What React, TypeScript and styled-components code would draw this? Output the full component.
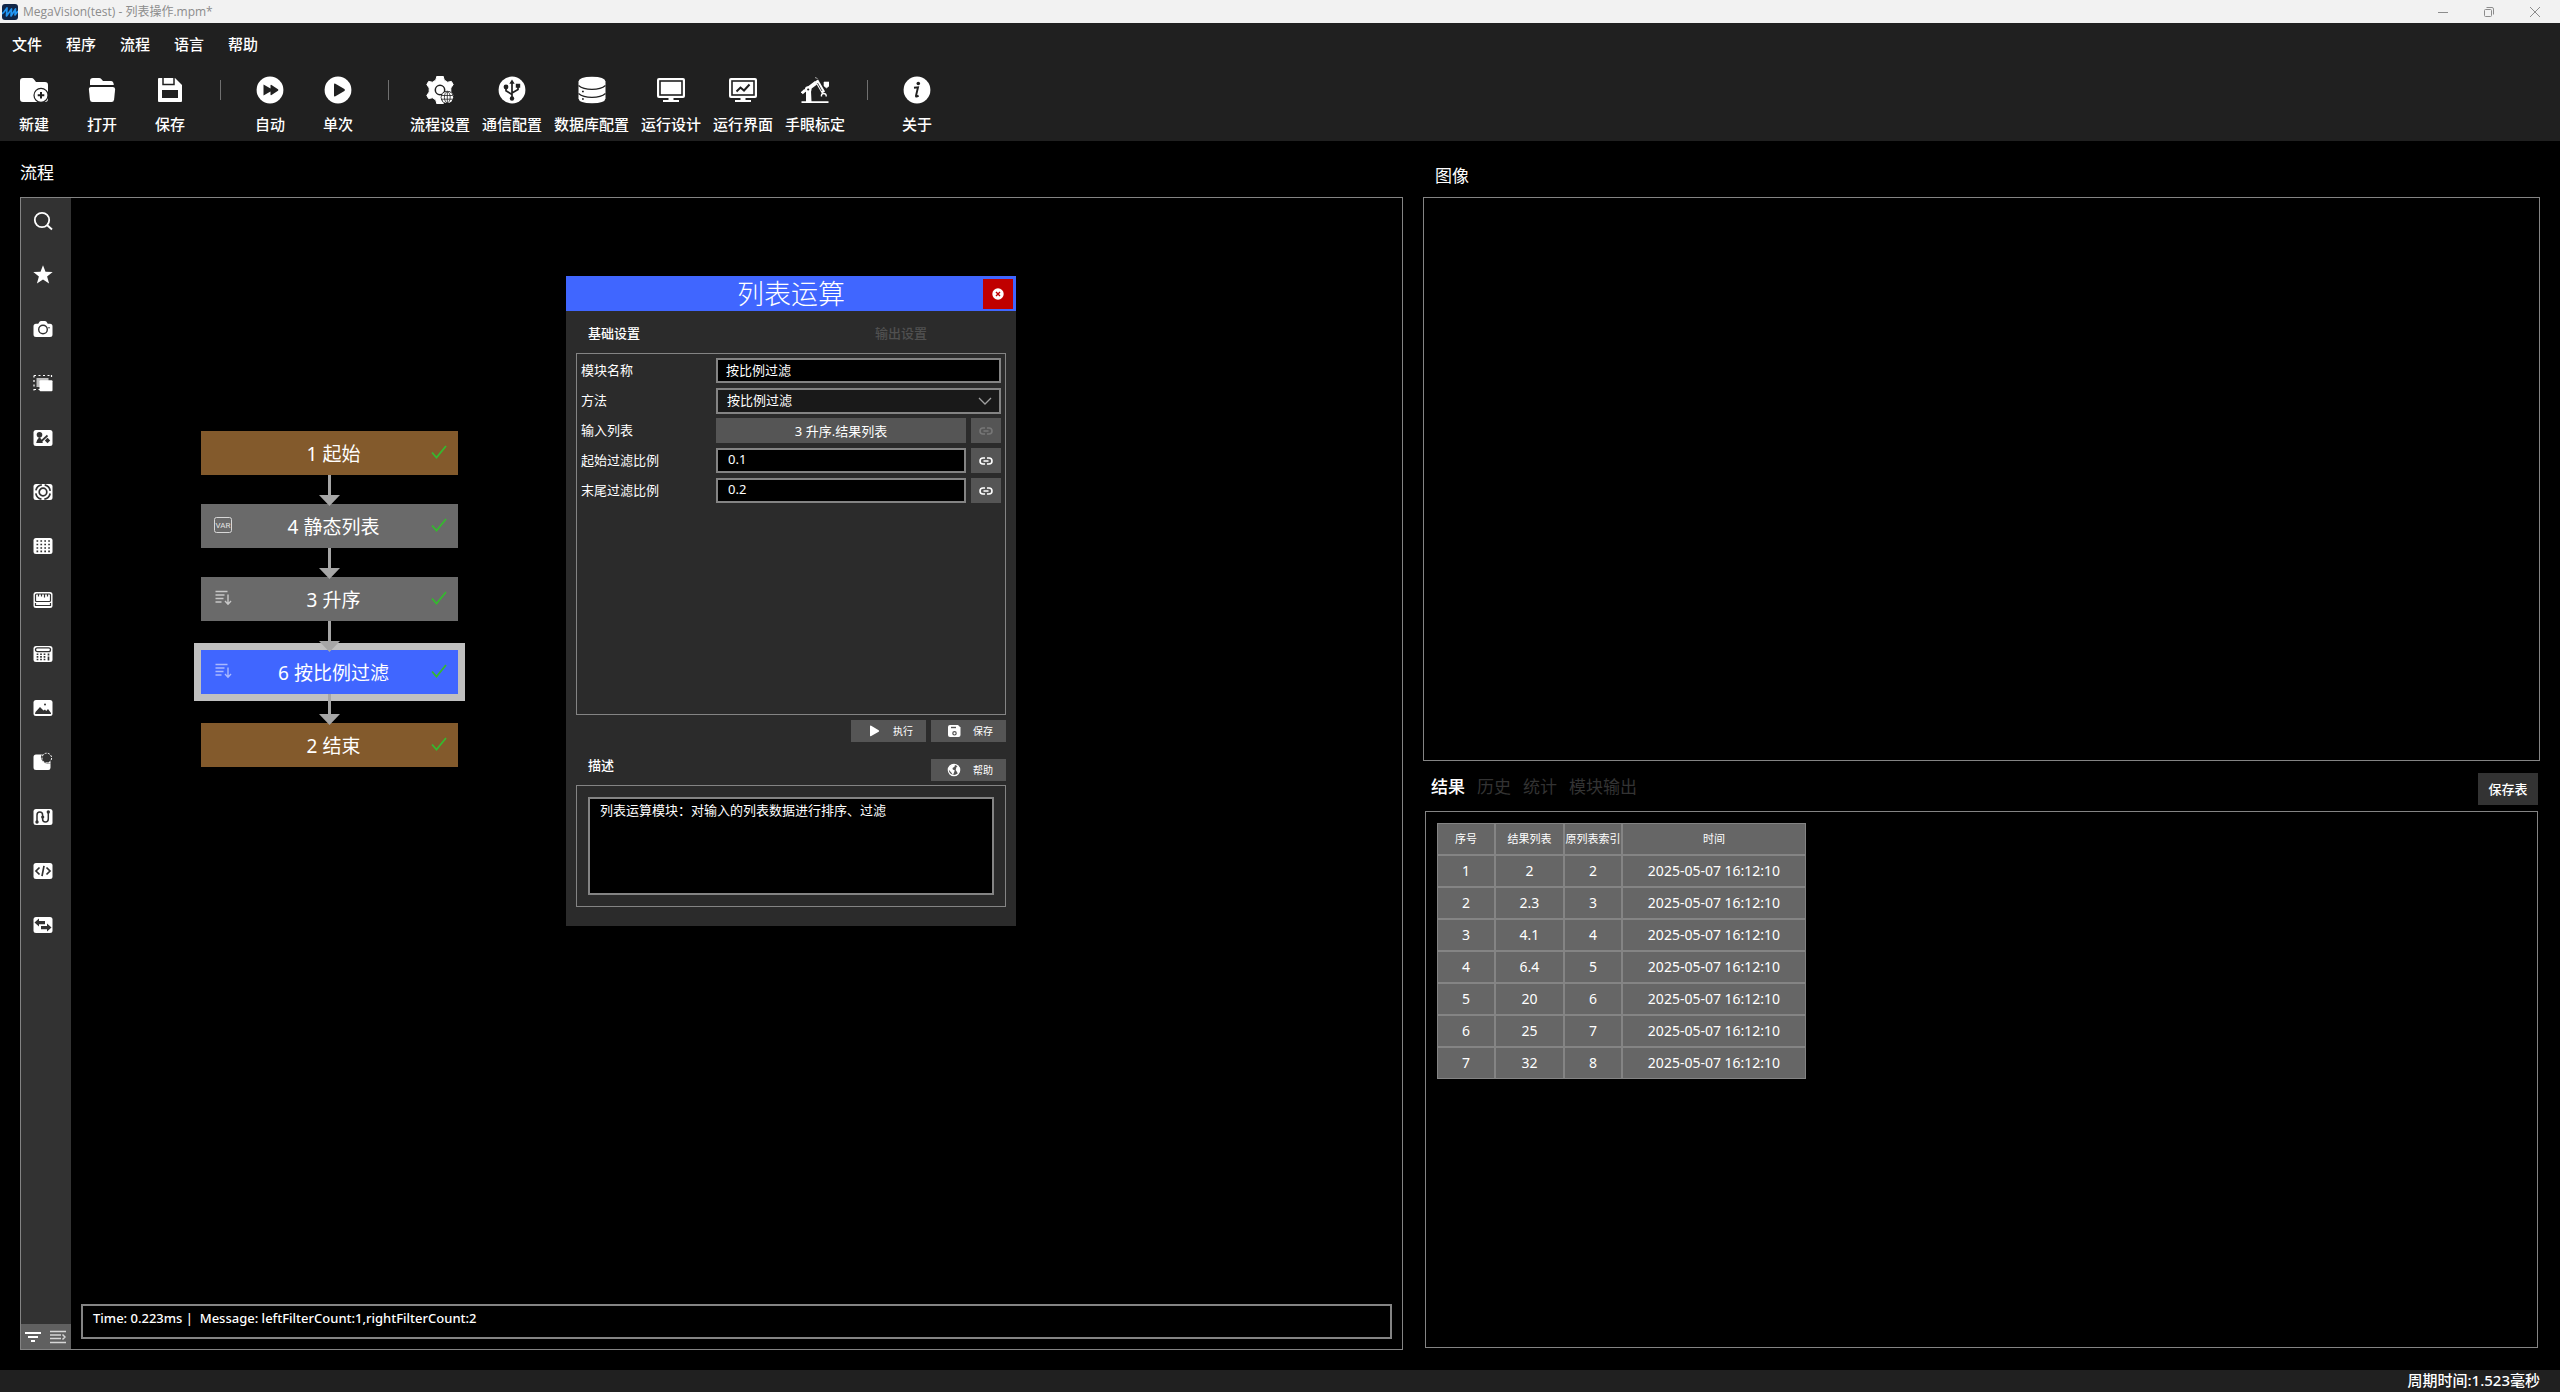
import React from "react";
import styled, { createGlobalStyle } from "styled-components";

const color = {
  bar: "#202020",
  side: "#323232",
  line: "#848484",
  blue: "#4066ff",
  node: "#6a6a6a",
  edge: "#a6a6a6",
  panel: "#2b2b2b",
  button: "#555555",
};

const GlobalStyle = createGlobalStyle`
  *, *::before, *::after { box-sizing: border-box; }
  body {
    margin: 0;
    background: #000;
    color: #fff;
    font-family: "Noto Sans", "Noto Sans CJK SC", sans-serif;
    font-size: 15px;
    line-height: 20px;
  }
  button, input, select, textarea { font: inherit; color: inherit; margin: 0; }
  button { border: 0; padding: 0; background: none; }
  h1, h2, ul { margin: 0; padding: 0; font-weight: 400; }
  ul { list-style: none; }
  svg { display: block; }
`;

const Window = styled.div`
  display: flex;
  flex-direction: column;
  min-height: 100vh;
`;

const TitleBar = styled.header`
  display: flex;
  align-items: center;
  gap: 5px;
  height: 23px;
  padding-left: 2px;
  background: #f2f2f2;
  color: #8c8c8c;
`;

const WindowTitle = styled.h1`
  flex: 1;
  font-family: "Open Sans", "Noto Sans CJK SC", sans-serif;
  font-size: 12px;
  line-height: 20px;
`;

const WindowButton = styled.button`
  display: grid;
  place-items: center;
  width: 46px;
  height: 20px;
`;

const WindowControls = styled.div`
  display: flex;
  padding-right: 2px;
`;

const MenuBar = styled.nav`
  display: flex;
  gap: 24px;
  height: 44px;
  padding: 0 12px 2px;
  background: ${color.bar};
`;

const MenuButton = styled.button`
  font-weight: 500;
`;

const Toolbar = styled.div`
  display: flex;
  height: 74px;
  background: ${color.bar};
`;

const ToolButton = styled.button`
  display: flex;
  flex-direction: column;
  align-items: center;
  gap: 10px;
  min-width: 68px;
  padding: 9px 6px 7px;
  font-weight: 500;
  white-space: nowrap;
`;

const ToolDivider = styled.span`
  width: 1px;
  height: 20px;
  margin: 13px 15px 0 16px;
  background: #707070;
`;

const Main = styled.main`
  flex: 1;
  display: grid;
  grid-template-columns: 1383fr 1117fr;
  gap: 20px;
  padding: 0 20px 20px;
`;

const FlowColumn = styled.section`
  display: flex;
  flex-direction: column;
  min-width: 0;
`;

const DataColumn = styled.section`
  display: grid;
  grid-template-rows: 56px 564fr 50px 537fr;
  min-width: 0;
  padding-bottom: 2px;
`;

const Heading = styled.h2<{ $inset?: boolean }>`
  height: 56px;
  padding: ${(p) => (p.$inset ? "24px 12px 0" : "21px 0 0")};
  font-size: 17px;
  font-weight: 400;
  line-height: 22px;
`;

const FlowPanel = styled.div`
  flex: 1;
  display: flex;
  border: 1px solid ${color.line};
`;

const SideBar = styled.aside`
  display: flex;
  flex-direction: column;
  justify-content: space-between;
  width: 50px;
  background: ${color.side};
`;

const SideList = styled.ul`
  display: flex;
  flex-direction: column;
  justify-content: space-between;
  height: 744px;
  padding-top: 6px;
`;

const SideButton = styled.button`
  display: grid;
  place-items: center;
  width: 44px;
  height: 34px;
`;

const SideFooter = styled.div`
  display: grid;
  grid-template-columns: 1fr 1fr;
  height: 25px;
  padding-right: 1px;
  background: #606060;
`;

const FooterButton = styled.button`
  display: grid;
  place-items: center;
`;

const Canvas = styled.div`
  position: relative;
  flex: 1;
  display: flex;
  flex-direction: column;
  justify-content: flex-end;
  padding: 10px;
`;

const LogBox = styled.div`
  height: 35px;
  padding: 2px 10px;
  border: 2px solid ${color.line};
  font-size: 13px;
  font-weight: 500;
  white-space: pre;
`;

const Flow = styled.div`
  position: absolute;
  left: 130px;
  top: 233px;
  width: 257px;
`;

type Tone = "terminal" | "step" | "active";
const toneFill: Record<Tone, string> = {
  terminal: "#835a2c",
  step: color.node,
  active: color.blue,
};

const Node = styled.div<{ $tone: Tone }>`
  display: grid;
  grid-template-columns: 22px 1fr 16px;
  align-items: center;
  height: 44px;
  padding: 0 11px 2px 13px;
  background: ${(p) => toneFill[p.$tone]};
  box-shadow: ${(p) => (p.$tone === "active" ? "0 0 0 7px #c0c0c0" : "none")};
  font-size: 19px;
  font-weight: 400;
  line-height: 28px;
  text-align: center;
`;

const NodeLabel = styled.span`
  padding-top: 3px;
`;

const Edge = styled.svg`
  position: relative;
  z-index: 1;
  margin: 0 auto -2px;
`;

const Dialog = styled.section`
  position: absolute;
  left: 495px;
  top: 78px;
  width: 450px;
  background: ${color.panel};
  font-size: 13px;
`;

const DialogHeader = styled.header`
  display: grid;
  grid-template-columns: 30px 1fr 30px;
  align-items: center;
  height: 35px;
  padding: 0 3px;
  background: ${color.blue};
`;

const DialogTitle = styled.h2`
  grid-column: 2;
  padding-bottom: 2px;
  font-family: "Noto Sans CJK SC", sans-serif;
  font-size: 27px;
  line-height: 33px;
  font-weight: 300;
  text-align: center;
`;

const CloseButton = styled.button`
  display: grid;
  place-items: center;
  height: 30px;
  background: #c00000;
`;

const DialogBody = styled.div`
  padding: 0 10px 19px;
`;

const DialogTabs = styled.div`
  display: grid;
  grid-template-columns: 1fr 1fr;
  gap: 10px;
  height: 42px;
  padding-bottom: 4px;
`;

const DialogTab = styled.button<{ $active?: boolean }>`
  padding: 6px 12px 0;
  color: ${(p) => (p.$active ? "#fff" : "#505050")};
  font-weight: 500;
  text-align: ${(p) => (p.$active ? "left" : "center")};
`;

const Form = styled.form`
  display: flex;
  flex-direction: column;
  gap: 5px;
  height: 362px;
  padding: 4px;
  border: 1px solid ${color.line};
`;

const FormRow = styled.div`
  display: grid;
  grid-template-columns: 130px 1fr auto;
  gap: 5px;
  height: 25px;
`;

const FieldLabel = styled.label`
  line-height: 25px;
`;

const TextField = styled.input<{ $wide?: boolean }>`
  grid-column: ${(p) => (p.$wide ? "2 / 4" : "2")};
  min-width: 0;
  height: 25px;
  padding: ${(p) => (p.$wide ? "0 8px 2px" : "0 10px 4px")};
  border: 2px solid ${color.line};
  border-radius: 0;
  background: #000;
  line-height: 16px;
`;

const SelectWrap = styled.div`
  grid-column: 2 / 4;
  position: relative;
  display: grid;
`;

const SelectField = styled.select`
  appearance: none;
  padding: 0 9px 2px;
  border: 2px solid ${color.line};
  border-radius: 0;
  background: #191919;
`;

const Chevron = styled.svg`
  position: absolute;
  right: 9px;
  top: 9px;
  pointer-events: none;
`;

const ValueButton = styled.button`
  background: ${color.button};
`;

const LinkButton = styled.button`
  display: grid;
  place-items: center;
  width: 30px;
  background: ${color.button};
  color: #fff;
  &:disabled { color: #777; }
`;

const ActionRow = styled.div`
  display: flex;
  justify-content: flex-end;
  gap: 5px;
  padding-top: 5px;
`;

const DescriptionHeader = styled.div`
  display: flex;
  justify-content: space-between;
  padding: 17px 0 4px 12px;
`;

const DescriptionLabel = styled.label`
  font-weight: 500;
  line-height: 12px;
`;

const ActionButton = styled.button`
  display: flex;
  align-items: center;
  justify-content: flex-end;
  gap: 12px;
  width: 75px;
  height: 22px;
  padding-right: 13px;
  background: ${color.button};
  font-size: 10px;
`;

const DescriptionFrame = styled.div`
  display: grid;
  padding: 11px;
  border: 1px solid ${color.line};
`;

const DescriptionText = styled.textarea`
  height: 98px;
  padding: 1px 10px;
  border: 2px solid ${color.line};
  border-radius: 0;
  background: #000;
  line-height: 20px;
  resize: none;
`;

const ImagePanel = styled.div`
  border: 1px solid ${color.line};
`;

const ResultBar = styled.div`
  display: flex;
  align-items: flex-end;
  justify-content: space-between;
  height: 50px;
  padding: 0 2px 6px 8px;
`;

const ResultTabs = styled.div`
  display: flex;
  gap: 12px;
`;

const ResultTab = styled.button<{ $active?: boolean }>`
  color: ${(p) => (p.$active ? "#fff" : "#333")};
  font-size: 17px;
  font-weight: ${(p) => (p.$active ? 500 : 400)};
  line-height: 36px;
`;

const SaveTableButton = styled.button`
  width: 60px;
  height: 32px;
  background: #333;
  font-size: 13px;
  font-weight: 500;
`;

const ResultPanel = styled.div`
  margin: 0 2px;
  padding: 11px;
  border: 1px solid ${color.line};
`;

const Table = styled.table`
  table-layout: fixed;
  width: 369px;
  border-spacing: 0;
  background: #666;
  font-size: 14px;
  text-align: center;
`;

const HeadCell = styled.th<{ $width: number }>`
  width: ${(p) => p.$width}px;
  height: 32px;
  padding: 0;
  border: 1px solid ${color.line};
  font-size: 11px;
  font-weight: 400;
  white-space: nowrap;
`;

const Cell = styled.td`
  height: 32px;
  padding: 0;
  border: 1px solid ${color.line};
`;

const StatusBar = styled.footer`
  height: 22px;
  padding: 0 20px;
  background: ${color.bar};
  font-weight: 500;
  line-height: 20px;
  text-align: right;
`;

/* ---------- icons ---------- */

const Icon28 = ({ children }: { children: React.ReactNode }) => (
  <svg width="28" height="28" viewBox="0 0 28 28" fill="#fff" aria-hidden="true">
    {children}
  </svg>
);

const D = color.bar;

const toolIcons: Record<string, React.ReactNode> = {
  create: (
    <Icon28>
      <path d="M3 2h8.5q1.5 0 2.4 1.2L16 6h9q3 0 3 3v14q0 3-3 3H3q-3 0-3-3V5q0-3 3-3z" />
      <circle cx="21" cy="19.3" r="7" fill="#fff" stroke={D} strokeWidth="1.2" />
      <path d="M21 16v6.6M17.7 19.3h6.6" stroke={D} strokeWidth="2" />
    </Icon28>
  ),
  open: (
    <Icon28>
      <path d="M2 9V5q0-3 3-3h6q1.500 0 2.500 1.300L15 5h8q2.500 0 2.800 4z" />
      <path d="M3 11h22q2.300 0 2.100 2.500l-1 10Q25.800 26 23.500 26h-19Q2.200 26 1.900 23.500l-1-10Q.7 11 3 11z" />
    </Icon28>
  ),
  save: (
    <Icon28>
      <path d="M3 2h16l7 7v16q0 1-1 1H3q-1 0-1-1V3q0-1 1-1z" />
      <path d="M7 2v6.500h11V2" fill="none" stroke={D} strokeWidth="1.500" />
      <path d="M6 14h16v8H6z" fill={D} />
    </Icon28>
  ),
  auto: (
    <Icon28>
      <circle cx="14" cy="14" r="13.4" />
      <path d="M7.500 8.500l7 4V9.500q0-1 1-.600l6.500 4.400q.8.700 0 1.400l-6.500 4.400q-1 .4-1-.600v-3l-7 4z" fill={D} />
    </Icon28>
  ),
  once: (
    <Icon28>
      <circle cx="14" cy="14" r="13.4" />
      <path d="M10 8.600q0-1.600 1.400-.8l9 5.300q1.200.9 0 1.800l-9 5.300q-1.400.8-1.400-.8z" fill={D} />
    </Icon28>
  ),
  flowSettings: (
    <Icon28>
      <path d="M11 0h6l1.300 4.200q2 1 3.300 2l3.800-.8 1.800 3.200-2.400 3.400v4l2.400 3.400-1.800 3.200-3.800-.8q-1.300 1-3.300 2L17 28h-6l-1.300-4.200q-2-1-3.300-2l-3.800.8L.8 19.400 3.200 16v-4L.8 8.600l1.800-3.200 3.800.8q1.300-1 3.300-2z" stroke="#fff" strokeLinejoin="round" />
      <circle cx="14" cy="14" r="4.700" fill="none" stroke={D} strokeWidth="1.500" />
      <circle cx="21.300" cy="21.300" r="6.600" fill={D} />
      <circle cx="21.300" cy="21.300" r="5.800" />
      <path d="M15.800 19.500h11M15.800 23.200h11M21.300 15.500v11.600" stroke={D} strokeWidth=".8" />
      <ellipse cx="21.300" cy="21.300" rx="2.900" ry="5.500" fill="none" stroke={D} strokeWidth=".8" />
    </Icon28>
  ),
  comm: (
    <Icon28>
      <circle cx="14" cy="14" r="13.4" />
      <path d="M14 6v15M14 18.500l-6-3.700V11M14 17l6-3.500V10" fill="none" stroke={D} strokeWidth="1.700" />
      <path d="M14 3.500l2.700 4.200h-5.400zM17.800 7.800h4.400v4h-4.400z" fill={D} />
      <circle cx="8" cy="11" r="2.400" fill={D} />
      <circle cx="14" cy="22.500" r="2.200" fill={D} />
    </Icon28>
  ),
  database: (
    <Icon28>
      <path d="M.5 5.500Q1 .8 14 .8T27.500 5.500v17Q27 27.200 14 27.200T.5 22.500z" />
      <path d="M.5 9.500Q5 13.400 14 13.400T27.500 9.500M.5 17.500Q5 21.400 14 21.400T27.500 17.500" fill="none" stroke={D} strokeWidth="1.400" />
      <path d="M4 15.500h1.800M4 23h1.800" stroke={D} strokeWidth="1.600" />
    </Icon28>
  ),
  runDesign: (
    <Icon28>
      <rect x="0" y="2" width="28" height="20" rx="2" />
      <rect x="3" y="5" width="22" height="14" fill="none" stroke={D} strokeWidth="1.600" />
      <path d="M11.500 21h5v3h-5zM6 24h16v2H6z" />
    </Icon28>
  ),
  runView: (
    <Icon28>
      <rect x="0" y="2" width="28" height="20" rx="2" />
      <rect x="3" y="5" width="22" height="14" fill="none" stroke={D} strokeWidth="1.600" />
      <path d="M7.500 15.500l4-4 3.500 3 5.500-6" fill="none" stroke={D} strokeWidth="2" />
      <path d="M11.500 21h5v3h-5zM6 24h16v2H6z" />
    </Icon28>
  ),
  handEye: (
    <Icon28>
      <path d="M.5 25.300h27v1.700H.5zM5 15h5l.5 10.500H5zM5.500 11.500L14 5l2 3.500-8 6z" />
      <circle cx="7.200" cy="13.500" r="3.300" />
      <circle cx="7.200" cy="13.500" r="1.100" fill={D} />
      <path d="M.8 17.200l3.500-3" fill="none" stroke="#fff" strokeWidth="3" />
      <path d="M15.500 4.500l7 12" fill="none" stroke="#fff" strokeWidth="3.600" />
      <path d="M16.500 7l4.500 8" fill="none" stroke={D} strokeWidth=".8" />
      <path d="M14 1.500l2.500 1M23 6h5v4l-2.500 2L23 10z" stroke="#fff" strokeWidth=".6" />
      <path d="M20.500 20.500q-.5-3 2.200-3t2.500 3" fill="none" stroke="#fff" strokeWidth="1.400" />
    </Icon28>
  ),
  about: (
    <Icon28>
      <circle cx="14" cy="14" r="13.4" />
      <circle cx="15.300" cy="7.500" r="1.800" fill={D} />
      <path d="M11 11.800l4-.5-2 8.500q-.3 1.600 2.600-.2" fill="none" stroke={D} strokeWidth="1.900" />
    </Icon28>
  ),
};

const Icon20 = ({ children }: { children: React.ReactNode }) => (
  <svg width="20" height="20" viewBox="0 0 20 20" fill="#fff" aria-hidden="true">
    {children}
  </svg>
);

const S = color.side;
const Tile = () => <rect x=".5" y="2" width="19" height="16" rx="2.500" />;

const sideIcons: [string, React.ReactNode][] = [
  ["搜索", <Icon20><circle cx="9" cy="9" r="7.200" fill="none" stroke="#fff" strokeWidth="1.800" /><path d="M14 14l5 4.500" stroke="#fff" strokeWidth="1.900" /></Icon20>],
  ["收藏", <Icon20><path d="M10 .3l2.500 6.500 7.200.3-5.600 4.400 2 7-6.100-4-6.100 4 2-7L.3 7.100l7.200-.3z" /></Icon20>],
  ["相机", <Icon20><path d="M6 3.500Q6.500 2 8 2h4q1.500 0 2 1.500l.7 1.200H17q2.500 0 2.500 2.500v8.300Q19.500 18 17 18H3Q.5 18 .5 15.500V7.200Q.5 4.700 3 4.700h2.300z" /><circle cx="10" cy="10.500" r="4.300" fill="none" stroke={S} strokeWidth="1.400" /><circle cx="16" cy="8.800" r=".8" fill={S} /></Icon20>],
  ["区域", <Icon20><path d="M1 2.500h18M1 2.500v15M1 16.500h6M18.500 2v4" fill="none" stroke="#fff" strokeWidth="1.200" strokeDasharray="2 2.500" /><path d="M3.500 5h12v9h-12z" fill="#bdbdbd" /><rect x="6.500" y="7.300" width="13" height="11" rx="1" /></Icon20>],
  ["定位", <Icon20><Tile /><circle cx="6.500" cy="6.800" r="2.800" fill={S} /><path d="M3.200 15q.6-3.500 3.300-6 2.700 2.500 3.300 6z" fill={S} /><path d="M8.500 13l6-5.500" stroke={S} strokeWidth="1.700" /><path d="M14.500 9.800l2.700 2.700-2.700 2.700-2.700-2.700z" fill={S} /></Icon20>],
  ["标定", <Icon20><Tile /><circle cx="10" cy="10" r="7.300" fill="none" stroke={S} strokeWidth="1.700" strokeDasharray="8.500 2.970" strokeDashoffset="-1.500" /><circle cx="10" cy="10" r="3.800" fill="none" stroke={S} strokeWidth="1.700" /></Icon20>],
  ["网格", <Icon20><Tile /><path d="M3.500 5h13.500M3.500 8.500h13.500M3.500 12h13.500M3.500 15.300h13.500" stroke={S} strokeWidth="1.700" strokeDasharray="1.700 2.200" /></Icon20>],
  ["测量", <Icon20><Tile /><rect x="2.500" y="4" width="15" height="7.500" rx="1" fill="none" stroke={S} strokeWidth="1.200" /><path d="M5.500 4v2.600M8.500 4v2.600M11.500 4v3.400M14.500 4v2.600" stroke={S} strokeWidth="1.200" /><path d="M2.500 13v2.500h15V13" fill="none" stroke={S} strokeWidth="1.200" /></Icon20>],
  ["计算", <Icon20><Tile /><rect x="2.500" y="3.800" width="15" height="3.800" rx="1.900" fill="none" stroke={S} strokeWidth="1.300" /><path d="M4.500 9.500v7M8 9.500v7M11.500 9.500v7" stroke={S} strokeWidth="1.700" strokeDasharray="1.600 1" /><path d="M15.500 9.500v2M15.500 12.500v4" stroke={S} strokeWidth="1.700" /></Icon20>],
  ["图像", <Icon20><Tile /><path d="M2 16l.5-2L7 9l3.500 3.500L12 11.500l1.200 1.500L15 11l3 4v1z" fill={S} /><circle cx="12" cy="6.500" r="1" fill={S} /></Icon20>],
  ["缺陷", <Icon20><path d="M3 2.500h6q-2.500 3 .5 6.500t8 2.500v4.300q0 2.200-2.200 2.200H3Q.5 18 .5 15.500V5Q.5 2.500 3 2.500z" /><path d="M9 2.500h2v6l4 3h2.500v-2l-6-1.500z" /><circle cx="13.800" cy="6" r="4.800" fill={S} stroke="#fff" strokeWidth="1" strokeDasharray="2 1.300" /></Icon20>],
  ["路径", <Icon20><Tile /><path d="M4 14.500V8q0-3 2.800-3t2.800 3v4q0 3 2.800 3t2.900-3V6" fill="none" stroke={S} strokeWidth="1.500" /><circle cx="4" cy="15" r="1.700" fill={S} /><circle cx="9.700" cy="10" r="1.600" fill={S} /><circle cx="15.300" cy="5" r="1.700" fill={S} /></Icon20>],
  ["脚本", <Icon20><Tile /><path d="M6.500 6.500L3 10l3.500 3.500M13.500 6.500L17 10l-3.500 3.500M11 4.800L9 15.200" fill="none" stroke={S} strokeWidth="1.700" /></Icon20>],
  ["逻辑", <Icon20><Tile /><path d="M1.500 7.500l4.500-4v2.400h6v3.300H6v2.300zM18.500 12.500l-4.500-4v2.400H8v3.300h6v2.300z" fill={S} /></Icon20>],
];

const VarIcon = () => (
  <svg width="18" height="16" viewBox="0 0 18 16" fill="none" aria-hidden="true">
    <rect x=".5" y=".5" width="17" height="15" rx="2" stroke="#d8d8d8" />
    <text x="9" y="11" fontSize="8" fontFamily="Roboto, sans-serif" textAnchor="middle" fill="#e4e4e4">VAR</text>
  </svg>
);

const SortIcon = ({ tint }: { tint: string }) => (
  <svg width="18" height="16" viewBox="0 0 18 16" fill="none" stroke={tint} strokeWidth="1.400" aria-hidden="true">
    <path d="M1.500 1.500h12M1.500 5h9M1.500 8.500h8M1.500 12h6M14 4.500v9.500M11 11l3 3.200 3-3.200" />
  </svg>
);

const CheckIcon = () => (
  <svg width="16" height="14" viewBox="0 0 16 14" fill="none" aria-label="完成">
    <path d="M1 7.500l4.500 5L15 1" stroke="#35b92f" strokeWidth="1.800" />
  </svg>
);

const LinkIcon = () => (
  <svg width="14" height="8" viewBox="0 0 14 8" fill="none" stroke="currentColor" strokeWidth="1.600" aria-hidden="true">
    <path d="M6 1H4a3 3 0 0 0 0 6h2M8 1h2a3 3 0 0 1 0 6H8M4.500 4h5" />
  </svg>
);

const FlowEdge = () => (
  <Edge width="21" height="31" viewBox="0 0 21 31" fill={color.edge}>
    <path d="M9 0h3v20h9L10.500 31 0 20h9z" />
  </Edge>
);

/* ---------- data ---------- */

const menus = ["文件", "程序", "流程", "语言", "帮助"];

const tools: [string, string][][] = [
  [["create", "新建"], ["open", "打开"], ["save", "保存"]],
  [["auto", "自动"], ["once", "单次"]],
  [
    ["flowSettings", "流程设置"],
    ["comm", "通信配置"],
    ["database", "数据库配置"],
    ["runDesign", "运行设计"],
    ["runView", "运行界面"],
    ["handEye", "手眼标定"],
  ],
  [["about", "关于"]],
];

const nodes: { label: string; tone: Tone; icon?: React.ReactNode }[] = [
  { label: "1 起始", tone: "terminal" },
  { label: "4 静态列表", tone: "step", icon: <VarIcon /> },
  { label: "3 升序", tone: "step", icon: <SortIcon tint="#c8c8c8" /> },
  { label: "6 按比例过滤", tone: "active", icon: <SortIcon tint="#a9b9ff" /> },
  { label: "2 结束", tone: "terminal" },
];

const columns: [string, number][] = [["序号", 58], ["结果列表", 69], ["原列表索引", 58], ["时间", 184]];
const results = ["2", "2.3", "4.1", "6.4", "20", "25", "32"];
const resultTime = "2025-05-07 16:12:10";

export default function App() {
  return (
    <Window>
      <GlobalStyle />
      <TitleBar>
        <svg width="16" height="16" viewBox="0 0 16 16" aria-hidden="true">
          <rect width="16" height="16" rx="3" fill="#102648" />
          <path d="M0 10l2-2 3-4-.5 8L9.500 5l-.5 7 4.500-7-.5 6 3-4" fill="none" stroke="#2196f3" strokeWidth="1.700" strokeLinejoin="round" />
        </svg>
        <WindowTitle>MegaVision(test) - 列表操作.mpm*</WindowTitle>
        <WindowControls>
          <WindowButton aria-label="最小化">
            <svg width="10" height="10" stroke="#8c8c8c"><path d="M0 5.500h10" /></svg>
          </WindowButton>
          <WindowButton aria-label="还原">
            <svg width="10" height="10" fill="none" stroke="#8c8c8c">
              <rect x=".5" y="2.500" width="7" height="7" rx="1" /><path d="M2.500 .5H8q1.500 0 1.500 1.500v5.500" />
            </svg>
          </WindowButton>
          <WindowButton aria-label="关闭">
            <svg width="10" height="10" stroke="#8c8c8c"><path d="M0 0l10 10M10 0L0 10" /></svg>
          </WindowButton>
        </WindowControls>
      </TitleBar>

      <MenuBar>
        {menus.map((m) => <MenuButton key={m}>{m}</MenuButton>)}
      </MenuBar>

      <Toolbar>
        {tools.map((group, i) => (
          <React.Fragment key={i}>
            {i > 0 && <ToolDivider />}
            {group.map(([icon, label]) => (
              <ToolButton key={icon}>
                {toolIcons[icon]}
                {label}
              </ToolButton>
            ))}
          </React.Fragment>
        ))}
      </Toolbar>

      <Main>
        <FlowColumn>
          <Heading>流程</Heading>
          <FlowPanel>
            <SideBar>
              <SideList>
                {sideIcons.map(([name, icon]) => (
                  <li key={name}><SideButton aria-label={name}>{icon}</SideButton></li>
                ))}
              </SideList>
              <SideFooter>
                <FooterButton aria-label="筛选">
                  <svg width="16" height="12" stroke="#fff" strokeWidth="2"><path d="M0 2h16M3 6h10M6 10h4" /></svg>
                </FooterButton>
                <FooterButton aria-label="展开">
                  <svg width="16" height="14" fill="none" stroke="#d6d6d6" strokeWidth="1.500">
                    <path d="M0 1.500h16M0 5h11M0 8.500h11M0 12.500h16M12.500 4.500L15 7l-2.500 2.500" />
                  </svg>
                </FooterButton>
              </SideFooter>
            </SideBar>

            <Canvas>
              <Flow>
                {nodes.map((n, i) => (
                  <React.Fragment key={n.label}>
                    {i > 0 && <FlowEdge />}
                    <Node $tone={n.tone}>
                      <span>{n.icon}</span>
                      <NodeLabel>{n.label}</NodeLabel>
                      <CheckIcon />
                    </Node>
                  </React.Fragment>
                ))}
              </Flow>

              <Dialog role="dialog" aria-labelledby="dialog-title">
                <DialogHeader>
                  <DialogTitle id="dialog-title">列表运算</DialogTitle>
                  <CloseButton aria-label="关闭">
                    <svg width="12" height="12" viewBox="0 0 12 12">
                      <circle cx="6" cy="6" r="5.700" fill="#fff" />
                      <path d="M4 4l4 4M8 4L4 8" stroke="#c00000" strokeWidth="1.400" />
                    </svg>
                  </CloseButton>
                </DialogHeader>
                <DialogBody>
                  <DialogTabs>
                    <DialogTab $active>基础设置</DialogTab>
                    <DialogTab>输出设置</DialogTab>
                  </DialogTabs>
                  <Form>
                    <FormRow>
                      <FieldLabel htmlFor="name">模块名称</FieldLabel>
                      <TextField id="name" $wide defaultValue="按比例过滤" />
                    </FormRow>
                    <FormRow>
                      <FieldLabel htmlFor="method">方法</FieldLabel>
                      <SelectWrap>
                        <SelectField id="method"><option>按比例过滤</option></SelectField>
                        <Chevron width="14" height="8" fill="none" stroke="#a0a0a0" strokeWidth="1.300">
                          <path d="M1 1l6 6 6-6" />
                        </Chevron>
                      </SelectWrap>
                    </FormRow>
                    <FormRow>
                      <FieldLabel htmlFor="source">输入列表</FieldLabel>
                      <ValueButton id="source" type="button">3 升序.结果列表</ValueButton>
                      <LinkButton type="button" disabled aria-label="链接"><LinkIcon /></LinkButton>
                    </FormRow>
                    <FormRow>
                      <FieldLabel htmlFor="start">起始过滤比例</FieldLabel>
                      <TextField id="start" defaultValue="0.1" />
                      <LinkButton type="button" aria-label="链接"><LinkIcon /></LinkButton>
                    </FormRow>
                    <FormRow>
                      <FieldLabel htmlFor="end">末尾过滤比例</FieldLabel>
                      <TextField id="end" defaultValue="0.2" />
                      <LinkButton type="button" aria-label="链接"><LinkIcon /></LinkButton>
                    </FormRow>
                  </Form>
                  <ActionRow>
                    <ActionButton>
                      <svg width="14" height="14" fill="#fff"><path d="M3 2.500q0-1.300 1.200-.7l7.500 4.400q1 .8 0 1.500L4.200 12Q3 12.700 3 11.500z" /></svg>
                      执行
                    </ActionButton>
                    <ActionButton>
                      <svg width="14" height="14" fill="#fff">
                        <path d="M3 1h8l2.500 2.500V11q0 2-2 2H3Q1 13 1 11V3q0-2 2-2z" />
                        <path d="M4 3.500h5" stroke={color.button} strokeWidth="1.400" />
                        <circle cx="7.500" cy="9.300" r="1.700" fill="none" stroke={color.button} strokeWidth="1.200" />
                      </svg>
                      保存
                    </ActionButton>
                  </ActionRow>
                  <DescriptionHeader>
                    <DescriptionLabel htmlFor="description">描述</DescriptionLabel>
                    <ActionButton>
                      <svg width="14" height="14" viewBox="0 0 14 14">
                        <circle cx="7" cy="7" r="5.700" fill="none" stroke="#fff" strokeWidth="1.200" />
                        <path d="M2 4.500L5 1.500l3 .3-.5 2L5.500 5l.3 1.500 2 1L7 9.500l-1 2.800-1.500-2.500L2 7zM9.500 4l2-1.200L13 6v2.500l-2 2.300-1.300-2.300-1-1.500z" fill="#fff" />
                      </svg>
                      帮助
                    </ActionButton>
                  </DescriptionHeader>
                  <DescriptionFrame>
                    <DescriptionText id="description" readOnly value="列表运算模块：对输入的列表数据进行排序、过滤" />
                  </DescriptionFrame>
                </DialogBody>
              </Dialog>

              <LogBox role="status">{"Time: 0.223ms |  Message: leftFilterCount:1,rightFilterCount:2"}</LogBox>
            </Canvas>
          </FlowPanel>
        </FlowColumn>

        <DataColumn>
          <Heading $inset>图像</Heading>
          <ImagePanel />
          <ResultBar>
            <ResultTabs>
              <ResultTab $active>结果</ResultTab>
              <ResultTab>历史</ResultTab>
              <ResultTab>统计</ResultTab>
              <ResultTab>模块输出</ResultTab>
            </ResultTabs>
            <SaveTableButton>保存表</SaveTableButton>
          </ResultBar>
          <ResultPanel>
            <Table>
              <thead>
                <tr>{columns.map(([name, w]) => <HeadCell key={name} $width={w}>{name}</HeadCell>)}</tr>
              </thead>
              <tbody>
                {results.map((value, i) => (
                  <tr key={value}>
                    <Cell>{i + 1}</Cell>
                    <Cell>{value}</Cell>
                    <Cell>{i + 2}</Cell>
                    <Cell>{resultTime}</Cell>
                  </tr>
                ))}
              </tbody>
            </Table>
          </ResultPanel>
        </DataColumn>
      </Main>

      <StatusBar>周期时间:1.523毫秒</StatusBar>
    </Window>
  );
}
